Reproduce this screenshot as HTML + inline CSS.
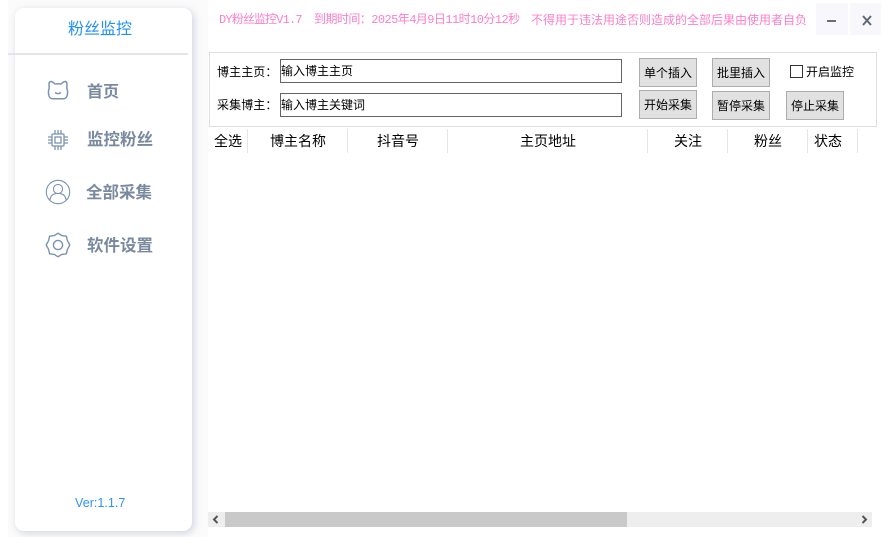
<!DOCTYPE html>
<html lang="zh"><head><meta charset="utf-8"><style>
html,body{margin:0;padding:0;background:#fff}
body{width:883px;height:537px;position:relative;overflow:hidden;font-family:"Liberation Sans","Noto Sans CJK SC",sans-serif;color:#000}
.a{position:absolute;box-sizing:border-box;white-space:nowrap}
.t{font-size:12px;line-height:18px}
.inp{left:280px;width:342px;height:24px;border:1px solid #646464;background:#fff;font-size:12px;line-height:22px;padding-left:0}
.btn{width:58px;background:#e1e1e1;border:1px solid #adadad;font-size:12px;text-align:center;line-height:29px}
.h{top:132px;height:18px;font-size:14px;line-height:18px;text-align:center}
.sep{top:129px;width:1px;height:24px;background:#e5e5e5}
.nav{font-size:16.5px;line-height:22px;font-weight:700;color:#7a8a9e}
svg{position:absolute;fill:none;stroke:#7b93b2}
</style></head><body>
<div class="a" style="left:8px;top:0;width:200px;height:537px;background:#fbfbfb"></div>
<div class="a" style="left:15px;top:8px;width:177px;height:523px;background:#fff;border-radius:9px;box-shadow:2px 2px 8px rgba(150,165,190,.45)"></div>
<div class="a" style="left:68px;top:19px;font-size:16px;line-height:22px;color:#2290f5">粉丝监控</div>
<div class="a" style="left:8px;top:53px;width:180px;height:2px;background:#e3e5e8"></div>

<svg style="left:47px;top:80px" width="22" height="20" viewBox="0 0 22 20" stroke-width="1.5"><path d="M3.5 1.5 Q5 1.2 8 4 Q11 3.4 14 4 Q17 1.2 18.5 1.5 Q20 2 20 4 L19.8 8 Q21.3 12 20 16 Q19 18.8 16 18.8 L6 18.8 Q3 18.8 2 16 Q0.8 12 2.2 8 L2 4 Q2 2 3.5 1.5Z"/><path d="M8 12.5 Q11 14.8 14 12.5"/></svg>
<div class="a nav" style="left:87px;top:82px;font-size:16px">首页</div>

<svg style="left:47px;top:129px" width="22" height="22" viewBox="0 0 22 22" stroke-width="1.3"><rect x="5" y="5" width="12" height="12" rx="1"/><rect x="8" y="8" width="6" height="6"/><path d="M8 1v4M11 1v4M14 1v4M8 17v4M11 17v4M14 17v4M1 8h4M1 11h4M1 14h4M17 8h4M17 11h4M17 14h4"/></svg>
<div class="a nav" style="left:87px;top:129px">监控粉丝</div>

<svg style="left:45px;top:179px" width="26" height="26" viewBox="0 0 26 26" stroke-width="1.1"><circle cx="13" cy="13" r="11.7"/><circle cx="13" cy="10" r="4.6"/><path d="M4.8 21 Q6 15 11 14.6 M21.2 21 Q20 15 15 14.6"/></svg>
<div class="a nav" style="left:86px;top:182px">全部采集</div>

<svg style="left:45px;top:232px" width="26" height="26" viewBox="0 0 26 26" stroke-width="1.4"><path d="M13 1.2 L16.8 3.6 L21.4 4.2 L22.4 8.6 L24.8 13 L22.4 17.4 L21.4 21.8 L16.8 22.4 L13 24.8 L9.2 22.4 L4.6 21.8 L3.6 17.4 L1.2 13 L3.6 8.6 L4.6 4.2 L9.2 3.6Z" stroke-linejoin="round"/><circle cx="13" cy="13" r="4.6"/></svg>
<div class="a nav" style="left:87px;top:235px">软件设置</div>

<div class="a" style="left:75px;top:494px;font-size:12.6px;line-height:18px;color:#2f93f5">Ver:1.1.7</div>

<div class="a" style="left:219px;top:12px;font-size:12px;line-height:17px;color:#fb7fc8;font-family:'Liberation Mono','Noto Sans CJK SC',monospace;letter-spacing:-.85px">DY粉丝监控V1.7</div>
<div class="a" style="left:314px;top:12px;font-size:12px;line-height:17px;color:#fb7fc8;font-family:'Liberation Mono','Noto Sans CJK SC',monospace;letter-spacing:-.56px">到期时间：2025年4月9日11时10分12秒</div>
<div class="a" style="left:531px;top:12px;font-size:12px;line-height:17px;color:#fb7fc8">不得用于违法用途否则造成的全部后果由使用者自负</div>

<div class="a" style="left:816px;top:3px;width:32px;height:32px;background:#f8f8fc"></div>
<div class="a" style="left:850px;top:3px;width:31px;height:32px;background:#f8f8fc"></div>
<div class="a" style="left:827px;top:20px;width:9px;height:2px;background:#666f7c"></div>
<svg style="left:862px;top:15px;stroke:#5f6873" width="10" height="11" viewBox="0 0 10 11" stroke-width="2"><path d="M1 1l8 9M9 1l-8 9"/></svg>

<div class="a" style="left:209px;top:52px;width:668px;height:75px;border:1px solid #dfdfdf"></div>
<div class="a t" style="left:217px;top:63px;letter-spacing:.1px">博主主页：</div>
<div class="a t" style="left:217px;top:96px;letter-spacing:.1px">采集博主：</div>
<div class="a inp" style="top:59px">输入博主主页</div>
<div class="a inp" style="top:93px">输入博主关键词</div>
<div class="a btn" style="left:639px;top:58px;height:29px;line-height:29px">单个插入</div>
<div class="a btn" style="left:712px;top:58px;height:29px;line-height:29px">批里插入</div>
<div class="a btn" style="left:639px;top:90px;height:29px;line-height:28px">开始采集</div>
<div class="a btn" style="left:712px;top:91px;height:29px">暂停采集</div>
<div class="a btn" style="left:786px;top:91px;height:29px">停止采集</div>
<div class="a" style="left:790px;top:65px;width:13px;height:13px;border:1px solid #333;background:#fff"></div>
<div class="a t" style="left:806px;top:63px">开启监控</div>

<div class="a h" style="left:208px;width:40px">全选</div>
<div class="a h" style="left:248px;width:100px">博主名称</div>
<div class="a h" style="left:348px;width:100px">抖音号</div>
<div class="a h" style="left:448px;width:200px">主页地址</div>
<div class="a h" style="left:648px;width:80px">关注</div>
<div class="a h" style="left:728px;width:80px">粉丝</div>
<div class="a h" style="left:798px;width:60px">状态</div>
<div class="a sep" style="left:247px"></div>
<div class="a sep" style="left:347px"></div>
<div class="a sep" style="left:447px"></div>
<div class="a sep" style="left:647px"></div>
<div class="a sep" style="left:727px"></div>
<div class="a sep" style="left:807px"></div>
<div class="a sep" style="left:857px"></div>

<div class="a" style="left:208px;top:512px;width:664px;height:15px;background:#eee"></div>
<div class="a" style="left:225px;top:512px;width:402px;height:15px;background:#c9c9c9"></div>
<svg style="left:212px;top:515px;stroke:#555" width="7" height="9" viewBox="0 0 7 9" stroke-width="2"><path d="M5.5 1L2 4.5 5.5 8"/></svg>
<svg style="left:861px;top:515px;stroke:#555" width="7" height="9" viewBox="0 0 7 9" stroke-width="2"><path d="M1.5 1L5 4.5 1.5 8"/></svg>
</body></html>
